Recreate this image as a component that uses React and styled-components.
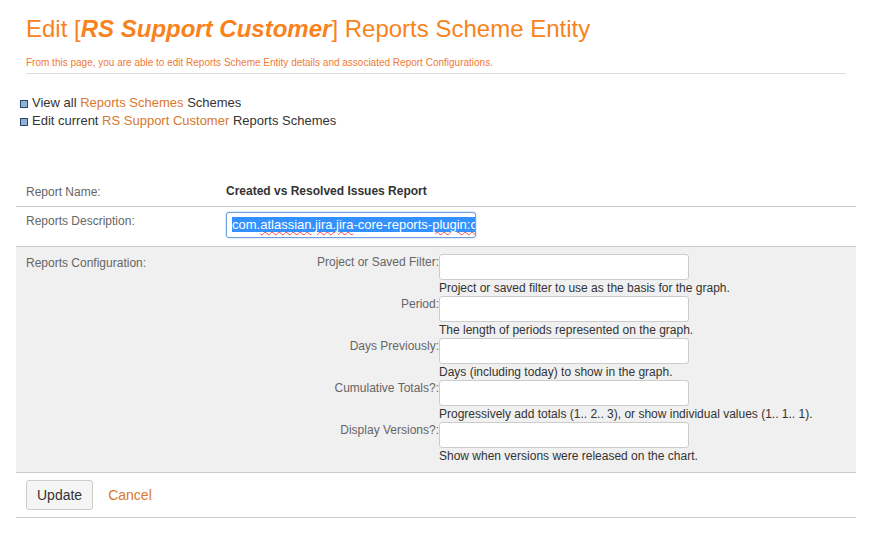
import React from 'react';
import styled, {createGlobalStyle} from 'styled-components';

const GlobalStyle = createGlobalStyle`
  body {
    margin: 0;
    background: #fff;
    font-family: "Liberation Sans", Arial, sans-serif;
    color: #333;
  }
`;

const fields = [
	{label: 'Project or Saved Filter:', help: 'Project or saved filter to use as the basis for the graph.'},
	{label: 'Period:', help: 'The length of periods represented on the graph.'},
	{label: 'Days Previously:', help: 'Days (including today) to show in the graph.'},
	{label: 'Cumulative Totals?:', help: 'Progressively add totals (1.. 2.. 3), or show individual values (1.. 1.. 1).'},
	{label: 'Display Versions?:', help: 'Show when versions were released on the chart.'},
];

const App = () => {
	return (
		<Page>
			<GlobalStyle/>
			<Header>
				<Title>Edit [<em>RS Support Customer</em>] Reports Scheme Entity</Title>
				<Intro>From this page, you are able to edit Reports Scheme Entity details and associated Report Configurations.</Intro>
			</Header>
			<Links>
				<LinkItem>View all <Link>Reports Schemes</Link> Schemes</LinkItem>
				<LinkItem>Edit current <Link>RS Support Customer</Link> Reports Schemes</LinkItem>
			</Links>
			<Form>
				<Row $pad="8px 10px 6px">
					<Label>Report Name:</Label>
					<Value>Created vs Resolved Issues Report</Value>
				</Row>
				<Row $pad="5px 10px 8px">
					<Label>Reports Description:</Label>
					<FocusedInput>
						<Selected>com.<Typo>atlassian</Typo>.<Typo>jira.jira</Typo>-core-reports-<Typo>plugin:cre</Typo></Selected>
					</FocusedInput>
				</Row>
				<Row $pad="7px 10px 8px" $shaded>
					<Label>Reports Configuration:</Label>
					<Config>
						{fields.map(f => (
							<React.Fragment key={f.label}>
								<FieldLabel>{f.label}</FieldLabel>
								<FieldBody>
									<TextInput/>
									<Help>{f.help}</Help>
								</FieldBody>
							</React.Fragment>
						))}
					</Config>
				</Row>
				<Actions>
					<Button>Update</Button>
					<Link $big>Cancel</Link>
				</Actions>
			</Form>
		</Page>
	);
};

export default App;

const Page = styled.div`
  width: 840px;
  padding: 0 0 0 16px;
`;

const Header = styled.div`
  margin: 0 10px;
  border-bottom: 1px solid #ddd;
`;

const Title = styled.h1`
  margin: 0;
  padding-top: 15px;
  font-size: 24px;
  line-height: 28px;
  font-weight: normal;
  color: #f8831c;

  em {
    font-weight: bold;
  }
`;

const Intro = styled.p`
  margin: 0;
  padding: 14px 0 4px;
  font-size: 10px;
  line-height: 12px;
  color: #f07a35;
`;

const Links = styled.ul`
  list-style: none;
  margin: 0;
  padding: 20px 0 0 4px;
`;

const LinkItem = styled.li`
  display: flex;
  align-items: center;
  font-size: 13px;
  line-height: 18px;
  color: #333;
  white-space: pre;

  &::before {
    content: '';
    width: 6px;
    height: 6px;
    margin: 2px 4px 0 0;
    background: #8fb1d8;
    border: 1px solid #2b4668;
  }
`;

const Link = styled.a`
  color: #d9782c;
  cursor: pointer;
  font-size: ${({$big}) => ($big ? '14px' : 'inherit')};
`;

const Form = styled.div`
  margin-top: 45px;
`;

const Row = styled.div`
  display: grid;
  grid-template-columns: 200px 1fr;
  padding: ${({$pad}) => $pad};
  border-bottom: 1px solid #ccc;
  background: ${({$shaded}) => ($shaded ? '#f0f0f0' : '#fff')};
  font-size: 12px;
  line-height: 16px;
`;

const Label = styled.div`
  color: #666;
  padding-top: 1px;
`;

const Value = styled.div`
  font-weight: bold;
  color: #333;
`;

const FocusedInput = styled.div`
  width: 250px;
  height: 26px;
  box-sizing: border-box;
  padding: 4px 5px;
  border: 1px solid #6fa2dc;
  border-radius: 3px;
  box-shadow: 0 0 2px #9ec3ee;
  background: #fff;
  overflow: hidden;
  white-space: nowrap;
  font-size: 13px;
  line-height: 16px;
`;

const Selected = styled.span`
  background: #3390ff;
  color: #fff;
`;

const Typo = styled.span`
  text-decoration: underline wavy #e44;
  text-decoration-thickness: 1px;
  text-underline-offset: 2px;
`;

const Config = styled.div`
  display: grid;
  grid-template-columns: 213px 250px;
`;

const FieldLabel = styled.div`
  text-align: right;
  color: #666;
`;

const FieldBody = styled.div`
  display: flex;
  flex-direction: column;
`;

const TextInput = styled.div`
  width: 250px;
  height: 26px;
  box-sizing: border-box;
  border: 1px solid #ccc;
  border-radius: 3px;
  background: #fff;
`;

const Help = styled.div`
  color: #333;
  white-space: nowrap;
`;

const Actions = styled.div`
  display: flex;
  align-items: center;
  gap: 15px;
  padding: 7px 10px;
  border-bottom: 1px solid #ccc;
`;

const Button = styled.button`
  height: 30px;
  padding: 0 10px;
  border: 1px solid #ccc;
  border-radius: 3px;
  background: #f5f5f5;
  color: #333;
  font-family: "Liberation Sans", Arial, sans-serif;
  font-size: 14px;
`;
